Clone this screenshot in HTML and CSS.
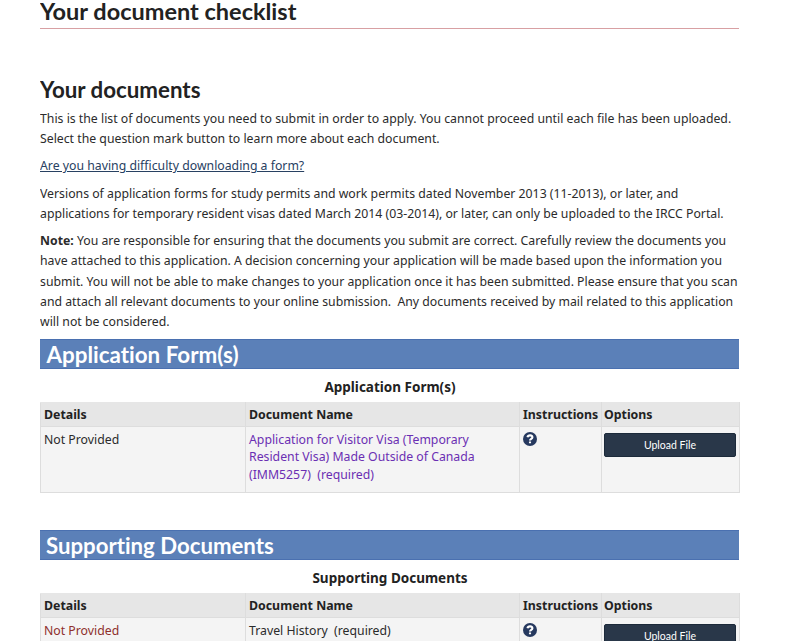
FILE: index.html
```html
<!DOCTYPE html>
<html lang="en">
<head>
<meta charset="utf-8">
<title>Your document checklist</title>
<link rel="stylesheet" href="styles.css">
</head>
<body>
<main>
<h1>Your document checklist</h1>
<h2>Your documents</h2>
<p>This is the list of documents you need to submit in order to apply. You cannot proceed until each file has been uploaded.<br>Select the question mark button to learn more about each document.</p>
<p><a class="help-link" href="#">Are you having difficulty downloading a form?</a></p>
<p>Versions of application forms for study permits and work permits dated November 2013 (11-2013), or later, and<br>applications for temporary resident visas dated March 2014 (03-2014), or later, can only be uploaded to the IRCC Portal.</p>
<p><strong>Note:</strong> You are responsible for ensuring that the documents you submit are correct. Carefully review the documents you<br>have attached to this application. A decision concerning your application will be made based upon the information you<br>submit. You will not be able to make changes to your application once it has been submitted. Please ensure that you scan<br>and attach all relevant documents to your online submission.&nbsp; Any documents received by mail related to this application<br>will not be considered.</p>
<section>
<h3 class="forms">Application Form(s)</h3>
<table>
<caption>Application Form(s)</caption>
<colgroup><col class="c1"><col class="c2"><col class="c3"><col class="c4"></colgroup>
<thead><tr><th>Details</th><th>Document Name</th><th>Instructions</th><th>Options</th></tr></thead>
<tbody><tr><td>Not Provided</td><td><a class="form-link" href="#">Application for Visitor Visa (Temporary<br>Resident Visa) Made Outside of Canada<br>(IMM5257)&nbsp; (required)</a></td>
<td><svg class="help" viewBox="0 0 14 14"><circle cx="7" cy="7" r="7"/><path d="M4.5 5.2C5 2.7 9.6 2.8 9.4 5.4C9.3 7 7 6.8 7 8.6M7 9.5V11.3"/></svg></td>
<td><button>Upload File</button></td></tr></tbody>
</table>
</section>
<section>
<h3>Supporting Documents</h3>
<table>
<caption>Supporting Documents</caption>
<colgroup><col class="c1"><col class="c2"><col class="c3"><col class="c4"></colgroup>
<thead><tr><th>Details</th><th>Document Name</th><th>Instructions</th><th>Options</th></tr></thead>
<tbody><tr><td class="missing">Not Provided</td><td>Travel History&nbsp; (required)</td>
<td><svg class="help" viewBox="0 0 14 14"><circle cx="7" cy="7" r="7"/><path d="M4.5 5.2C5 2.7 9.6 2.8 9.4 5.4C9.3 7 7 6.8 7 8.6M7 9.5V11.3"/></svg></td>
<td><button>Upload File</button></td></tr></tbody>
</table>
</section>
</main>
</body>
</html>
```
FILE: styles.css
```css
* { box-sizing: border-box; }
html { overflow: hidden; }
body { margin: 0; height: 641px; overflow: hidden; background: #fff; color: #2b2b2b; font: 12.28px/20.3px "Noto Sans", sans-serif; }
main { width: 700px; height: 641px; margin-left: 40px; padding-right: 1px; overflow: hidden; }
h1, h2, h3 { font-family: Lato, sans-serif; font-weight: 700; margin: 0; font-variant-ligatures: none; }
h1 { height: 29px; border-bottom: 1px solid #d8a0a3; font-size: 23.5px; line-height: 22px; color: #222; }
h2 { margin-top: 47px; font-size: 22.3px; line-height: 27px; color: #222; }
p { margin: 6px 0 6.9px; white-space: nowrap; }
p + p { margin-top: 0; }
p:last-of-type { margin-bottom: 6.3px; }
.help-link { color: #284162; }
h3 { height: 30px; margin-bottom: 1px; padding-left: 6px; border: 1px solid #4a70b0; border-width: 1px 0; background: #5b80b8; color: #fff; font-size: 22.2px; line-height: 30px; }
h3.forms { font-size: 22.4px; padding-left: 6.5px; }
section { height: 191px; }
table { width: 699px; table-layout: fixed; border-collapse: collapse; line-height: 17.6px; }
caption { height: 32px; padding-top: 7px; font-size: 13.5px; font-weight: 700; color: #222; line-height: 20px; }
.c1 { width: 205px; }
.c2 { width: 274px; }
.c3 { width: 82px; }
.c4 { width: 138px; }
th { height: 24px; padding: 0 3px; background: #e6e6e6; border: 1px solid #ddd; border-top-color: #e6e6e6; text-align: left; white-space: nowrap; font-size: 12.35px; color: #222; }
th:last-child, td:last-child { padding-left: 2px; }
td { height: 66px; padding: 3.8px 3px 3px; border: 1px solid #ddd; background: #f4f4f4; vertical-align: top; }
.form-link { color: #6b2fb3; text-decoration: none; }
.missing { color: #8e302c; }
.help { display: block; width: 14px; height: 14px; margin-top: 1.2px; }
.help circle { fill: #26395f; }
.help path { fill: none; stroke: #fff; stroke-width: 2.1; }
button { display: block; width: 132px; height: 24px; margin-top: 2.2px; padding: 0; border: 1px solid #1c2a3a; border-radius: 2px; background: #293749; color: #fff; font: 10.5px Lato, sans-serif; font-variant-ligatures: none; }
```
